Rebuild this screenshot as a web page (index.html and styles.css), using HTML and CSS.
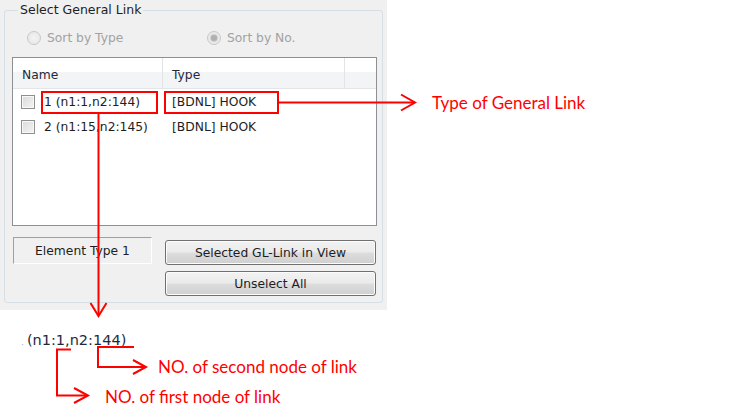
FILE: index.html
```html
<!DOCTYPE html>
<html>
<head>
<meta charset="utf-8">
<link rel="stylesheet" href="styles.css">
</head>
<body>
<div class="page">
  <div class="panel">
    <fieldset class="group">
      <legend class="legend">Select General Link</legend>
      <div class="radios">
        <label class="radio disabled"><span class="dot"></span>Sort by Type</label>
        <label class="radio disabled"><span class="dot checked"></span>Sort by No.</label>
      </div>
      <div class="listbox">
        <div class="lv-header">
          <div class="lv-col c-name">Name</div>
          <div class="lv-col c-type">Type</div>
          <div class="lv-col c-fill"></div>
        </div>
        <div class="lv-row">
          <div class="lv-cell c-name"><span class="check"></span>1 (n1:1,n2:144)</div>
          <div class="lv-cell c-type">[BDNL] HOOK</div>
        </div>
        <div class="lv-row">
          <div class="lv-cell c-name"><span class="check"></span>2 (n1:15,n2:145)</div>
          <div class="lv-cell c-type">[BDNL] HOOK</div>
        </div>
      </div>
      <div class="bottom">
        <div class="static">Element Type 1</div>
        <div class="buttons">
          <button class="btn">Selected GL-Link in View</button>
          <button class="btn">Unselect All</button>
        </div>
      </div>
    </fieldset>
  </div>

  <div class="zoomtext"><span class="speck">.</span>(n1:1,n2:144)</div>

  <span class="note note-type">Type of General Link</span>
  <span class="note note-second">NO. of second node of link</span>
  <span class="note note-first">NO. of first node of link</span>

  <svg class="overlay" width="745" height="420" viewBox="0 0 745 420">
    <g fill="none" stroke="#ff0000" stroke-width="2">
      <rect x="42" y="92" width="115" height="21"/>
      <rect x="165" y="92" width="113" height="21"/>
      <line x1="279" y1="102.5" x2="414" y2="102.5"/>
      <polyline points="401,94.5 415,102.5 401,110.5"/>
      <line x1="98.5" y1="114" x2="98.5" y2="315"/>
      <polyline points="90.5,303 98.5,316 106.5,303"/>
      <polyline points="134,347 98,347 98,367 145,367"/>
      <polyline points="133,360 146,367 133,374"/>
      <polyline points="71,349.5 57,349.5 57,395.5 87,395.5"/>
      <polyline points="74,388 88,395.5 74,403"/>
    </g>
  </svg>
</div>
</body>
</html>
```

FILE: styles.css
```css
* { box-sizing: border-box; }
html, body { margin: 0; padding: 0; background: #ffffff; }
body {
  font-family: "DejaVu Sans", "Noto Sans", sans-serif;
  font-size: 12.3px;
  color: #1e1e1e;
}
.page {
  position: relative;
  width: 745px;
  height: 420px;
  overflow: hidden;
}
.panel {
  width: 387px;
  height: 310px;
  background: #f0f0f0;
  padding: 2px 4px 7px 4px;
}
.group {
  margin: 0;
  height: 100%;
  border: 1px solid #d5dfe5;
  border-radius: 3px;
  padding: 0 5px 5px 7px;
  display: flex;
  flex-direction: column;
}
.legend {
  margin-left: 6px;
  padding: 0 2px;
  line-height: 16px;
  font-size: 12.5px;
  color: #1e1e1e;
}
.radios {
  display: flex;
  align-items: center;
  height: 39px;
  padding-left: 15px;
  flex: none;
}
.radio {
  display: flex;
  align-items: center;
  gap: 6px;
  font-size: 12.3px;
}
.radio:first-child { width: 180px; }
.radio.disabled { color: #a2a2a2; }
.dot {
  width: 14px;
  height: 14px;
  border-radius: 50%;
  border: 1px solid #c8c8c8;
  background: radial-gradient(circle at 50% 50%, #f4f4f4 0, #e4e4e4 100%);
  display: flex;
  align-items: center;
  justify-content: center;
}
.dot.checked::after {
  content: "";
  width: 6px;
  height: 6px;
  border-radius: 50%;
  background: #b0b0b0;
  box-shadow: 0 0 0 1px #d0d0d0;
}
.listbox {
  height: 169px;
  flex: none;
  border: 1px solid #8c8f94;
  background: #ffffff;
}
.lv-header {
  display: flex;
  height: 31px;
  background: linear-gradient(#ffffff 0, #ffffff 45%, #f3f4f6 46%, #f3f4f6 100%);
  border-bottom: 1px solid #e3e5e8;
}
.lv-col {
  display: flex;
  align-items: center;
  padding-left: 9px;
  padding-top: 3px;
  border-right: 1px solid #e1e3e6;
  color: #1e2a3c;
}
.c-name { width: 150px; }
.c-type { width: 182px; }
.c-fill { flex: 1; border-right: none; }
.lv-row {
  display: flex;
  height: 25px;
}
.lv-cell {
  display: flex;
  align-items: center;
  padding-left: 9px;
  color: #1e1e1e;
  white-space: nowrap;
}
.lv-cell.c-name { padding-left: 8px; gap: 9px; }
.check {
  width: 14px;
  height: 14px;
  border: 1px solid #8f8f8f;
  background: linear-gradient(135deg, #dadada 0, #f4f4f4 100%);
  box-shadow: inset 0 0 0 1px #f8f8f8;
}
.bottom {
  display: flex;
  margin-top: 11px;
  gap: 13px;
  padding-left: 1px;
}
.static {
  width: 139px;
  height: 27px;
  border-top: 1px solid #a0a0a0;
  border-left: 1px solid #a0a0a0;
  border-right: 1px solid #ffffff;
  border-bottom: 1px solid #ffffff;
  display: flex;
  align-items: center;
  justify-content: center;
  padding-top: 1px;
  color: #1e1e1e;
}
.buttons {
  display: flex;
  flex-direction: column;
  gap: 6px;
  padding-top: 3px;
  width: 211px;
}
.btn {
  height: 25px;
  margin: 0;
  padding: 0;
  border: 1px solid #707070;
  border-radius: 3px;
  background: linear-gradient(#f2f2f2 0, #ebebeb 48%, #dddddd 52%, #cfcfcf 100%);
  box-shadow: inset 0 0 0 1px #fcfcfc;
  font-family: "DejaVu Sans", "Noto Sans", sans-serif;
  font-size: 12.3px;
  color: #1e1e1e;
}
.zoomtext {
  position: absolute;
  left: 21px;
  top: 330px;
  font-size: 14.5px;
  line-height: 20px;
  color: #1e2a3c;
}
.speck { color: #9ab0d0; font-size: 9px; margin-right: 3px; }
.note {
  position: absolute;
  font-family: "Lato", "Open Sans", sans-serif;
  font-size: 17px;
  line-height: 20px;
  color: #ff0000;
  white-space: nowrap;
}
.note-type { left: 432px; top: 93px; }
.note-second { left: 158px; top: 357px; }
.note-first { left: 105px; top: 387px; }
.overlay {
  position: absolute;
  left: 0;
  top: 0;
  pointer-events: none;
}
```
